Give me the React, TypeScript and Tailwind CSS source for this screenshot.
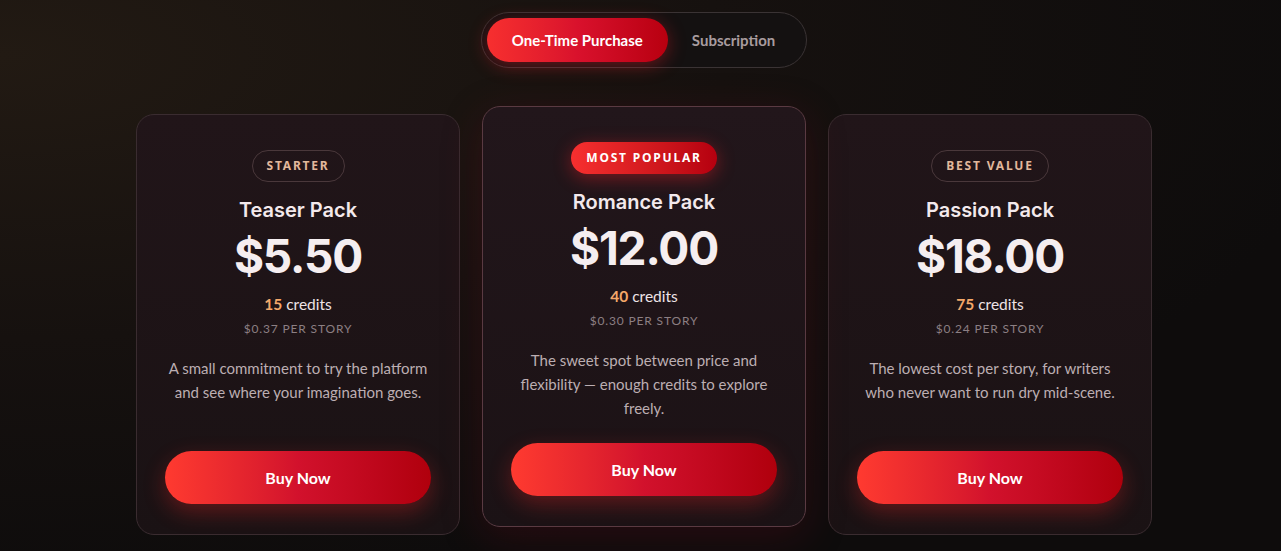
import React, { useState } from 'react';

type Plan = {
  badge: string;
  name: string;
  price: string;
  credits: number;
  perStory: string;
  description: string;
  featured?: boolean;
};

const plans: Plan[] = [
  {
    badge: 'Starter',
    name: 'Teaser Pack',
    price: '$5.50',
    credits: 15,
    perStory: '$0.37 per story',
    description: 'A small commitment to try the platform and see where your imagination goes.',
  },
  {
    badge: 'Most Popular',
    name: 'Romance Pack',
    price: '$12.00',
    credits: 40,
    perStory: '$0.30 per story',
    description: 'The sweet spot between price and flexibility — enough credits to explore freely.',
    featured: true,
  },
  {
    badge: 'Best Value',
    name: 'Passion Pack',
    price: '$18.00',
    credits: 75,
    perStory: '$0.24 per story',
    description: 'The lowest cost per story, for writers who never want to run dry mid-scene.',
  },
];

const headFont = "font-['Inter',_'Liberation_Sans',_sans-serif]";
const bodyFont = "font-['Lato',_'Noto_Sans',_sans-serif]";
const badgeFont = "font-['Noto_Sans',_'Open_Sans',_sans-serif]";

const PlanCard: React.FC<{ plan: Plan }> = ({ plan }) => {
  return (
    <div
      className={`flex w-[324px] flex-col items-center rounded-[18px] border px-[28px] pt-[35px] pb-[30px] text-center ${
        plan.featured
          ? '-translate-y-2 border-[#5a3a42] bg-gradient-to-b from-[#22161b] to-[#1b1215] shadow-[0_10px_40px_rgba(120,10,30,0.25)]'
          : 'border-[#3a2c30] bg-gradient-to-b from-[#211519] to-[#1a1214]'
      }`}
    >
      {plan.featured ? (
        <span className={`${badgeFont} rounded-full bg-gradient-to-r from-[#f72f2f] to-[#b5000f] px-[15px] py-[8px] text-[12px] leading-[16px] font-bold uppercase tracking-[0.15em] text-white shadow-[0_4px_18px_rgba(230,30,40,0.45)]`}>
          {plan.badge}
        </span>
      ) : (
        <span className={`${badgeFont} rounded-full border border-[#4a383b] px-[14px] py-[7px] text-[12px] leading-[16px] font-bold uppercase tracking-[0.15em] text-[#e2b89c]`}>
          {plan.badge}
        </span>
      )}
      <h3 className={`${headFont} mt-[14px] text-[20px] leading-[28px] font-semibold text-[#f3e9ec]`}>{plan.name}</h3>
      <div className={`${headFont} text-[46px] font-bold leading-[64px] tracking-[-0.025em] text-[#f5eef0]`}>
        {plan.price}
      </div>
      <div className={`${bodyFont} mt-[5px] text-[15.5px] leading-[22px] text-[#eee3e6]`}>
        <span className="font-bold text-[#f4a86a]">{plan.credits}</span> credits
      </div>
      <div className={`${bodyFont} mt-[6px] text-[12px] leading-[16px] uppercase tracking-[0.07em] text-[#8c7f83]`}>{plan.perStory}</div>
      <p className={`${bodyFont} mt-[19px] mb-[23px] text-[15px] leading-[24px] text-[#bcaeb2]`}>{plan.description}</p>
      <button
        className={`${bodyFont} mt-auto h-[53px] w-full rounded-full bg-gradient-to-r from-[#ff3a30] via-[#d2112c] to-[#b0000c] text-[16px] font-bold text-white shadow-[0_8px_22px_rgba(255,40,40,0.3)]`}
      >
        Buy Now
      </button>
    </div>
  );
};

export default function App() {
  const [mode, setMode] = useState<'once' | 'sub'>('once');

  return (
    <div className="min-h-[551px] w-full bg-[radial-gradient(ellipse_at_0%_10%,#221a13_0%,#16110f_40%,#0e0c0c_75%)] pt-[12px] pb-[20px] pl-[7px]">
      <div className="flex justify-center">
        <div className="flex items-center rounded-full border border-[#3a3334] bg-[#141111] p-[5px] pr-[31px]">
          <button
            onClick={() => setMode('once')}
            className={`${bodyFont} h-[44px] rounded-full px-[25px] text-[15px] font-bold ${
              mode === 'once'
                ? 'bg-gradient-to-r from-[#f72f2f] via-[#d9112c] to-[#b8000f] text-white shadow-[0_4px_18px_rgba(230,30,40,0.4)]'
                : 'text-[#a89c9f]'
            }`}
          >
            One-Time Purchase
          </button>
          <button
            onClick={() => setMode('sub')}
            className={`${bodyFont} ml-[24px] h-[44px] text-[15px] font-bold text-[#a89c9f]`}
          >
            Subscription
          </button>
        </div>
      </div>
      <div className="mt-[46px] flex items-stretch justify-center gap-[22px]">
        {plans.map((p) => (
          <PlanCard key={p.name} plan={p} />
        ))}
      </div>
    </div>
  );
}
